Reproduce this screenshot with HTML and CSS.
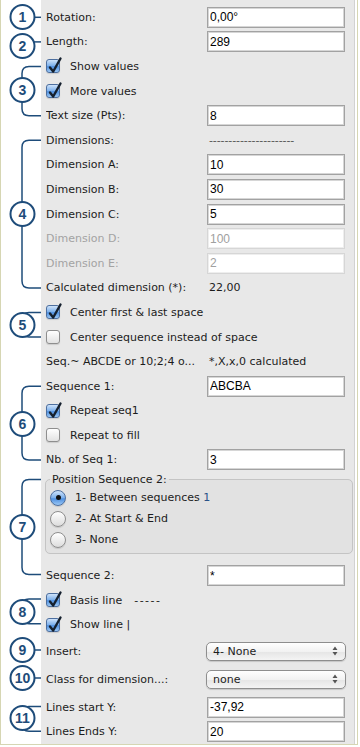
FILE: index.html
```html
<!DOCTYPE html>
<html lang="en">
<head>
    <meta charset="UTF-8">
    <meta name="viewport" content="width=device-width, initial-scale=1.0">
    <title>Dimension settings</title>
    <link rel="stylesheet" href="styles.css">
</head>
<body>

    <div class="frame">
        <!-- numbered callouts on the left -->
        <svg class="notes" width="40" height="744" viewBox="0 0 40 744">
            <g class="lines">
                <path d="M21.5,17.3 H40"/>
                <path d="M21.5,41.9 H40"/>
                <path d="M40,66.5 H28 Q21,66.5 21,73.5 V108.7 Q21,115.7 28,115.7 H40"/>
                <path d="M40,140.3 H28 Q21,140.3 21,147.3 V280.9 Q21,287.9 28,287.9 H40"/>
                <path d="M40,312.5 H28 Q21,312.5 21,319.5 V330.1 Q21,337.1 28,337.1 H40"/>
                <path d="M40,386.3 H28 Q21,386.3 21,393.3 V453.1 Q21,460.1 28,460.1 H40"/>
                <path d="M40,479.5 H28 Q21,479.5 21,486.5 V567.5 Q21,574.5 28,574.5 H40"/>
                <path d="M40,599 H28 Q21,599 21,606 V616.7 Q21,623.7 28,623.7 H40"/>
                <path d="M21.5,650 H40"/>
                <path d="M21.5,678 H40"/>
                <path d="M40,706.6 H28 Q21,706.6 21,713.6 V724.2 Q21,731.2 28,731.2 H40"/>
            </g>
            <g class="dots">
                <circle cx="21.5" cy="17" r="12"/>
                <circle cx="21.5" cy="46" r="12"/>
                <circle cx="21.5" cy="90" r="12"/>
                <circle cx="21.5" cy="214" r="12"/>
                <circle cx="21.5" cy="325" r="12"/>
                <circle cx="21.5" cy="424" r="12"/>
                <circle cx="21.5" cy="527" r="12"/>
                <circle cx="21.5" cy="612" r="12"/>
                <circle cx="21.5" cy="650" r="12"/>
                <circle cx="21.5" cy="678" r="12"/>
                <circle cx="21.5" cy="718" r="12"/>
            </g>
            <g class="nums">
                <text x="21.5" y="22">1</text>
                <text x="21.5" y="51">2</text>
                <text x="21.5" y="95">3</text>
                <text x="21.5" y="219">4</text>
                <text x="21.5" y="330">5</text>
                <text x="21.5" y="429">6</text>
                <text x="21.5" y="532">7</text>
                <text x="21.5" y="617">8</text>
                <text x="21.5" y="655">9</text>
                <text x="21.5" y="683">10</text>
                <text x="21.5" y="723">11</text>
            </g>
        </svg>

        <div class="panel">
            <div class="row">
                <span class="label">Rotation:</span>
                <input class="field" type="text" value="0,00°">
            </div>
            <div class="row">
                <span class="label">Length:</span>
                <input class="field" type="text" value="289">
            </div>
            <div class="row">
                <span class="box on"><svg viewBox="0 0 14 14"><path d="M3,7.5 L6.2,11.5 L13.5,-1.5"/></svg></span>
                <span>Show values</span>
            </div>
            <div class="row">
                <span class="box on"><svg viewBox="0 0 14 14"><path d="M3,7.5 L6.2,11.5 L13.5,-1.5"/></svg></span>
                <span>More values</span>
            </div>
            <div class="row">
                <span class="label">Text size (Pts):</span>
                <input class="field" type="text" value="8">
            </div>

            <!-- dimensions -->
            <div class="row">
                <span class="label">Dimensions:</span>
                <span class="value dashes">----------------------</span>
            </div>
            <div class="row">
                <span class="label">Dimension A:</span>
                <input class="field" type="text" value="10">
            </div>
            <div class="row">
                <span class="label">Dimension B:</span>
                <input class="field" type="text" value="30">
            </div>
            <div class="row">
                <span class="label">Dimension C:</span>
                <input class="field" type="text" value="5">
            </div>
            <div class="row">
                <span class="label off">Dimension D:</span>
                <input class="field" type="text" value="100" disabled>
            </div>
            <div class="row">
                <span class="label off">Dimension E:</span>
                <input class="field" type="text" value="2" disabled>
            </div>
            <div class="row">
                <span class="label">Calculated dimension (*):</span>
                <span class="value">22,00</span>
            </div>

            <div class="row">
                <span class="box on"><svg viewBox="0 0 14 14"><path d="M3,7.5 L6.2,11.5 L13.5,-1.5"/></svg></span>
                <span>Center first &amp; last space</span>
            </div>
            <div class="row">
                <span class="box"></span>
                <span>Center sequence instead of space</span>
            </div>
            <div class="row">
                <span class="label">Seq.~ ABCDE or 10;2;4 o...</span>
                <span class="value">*,X,x,0 calculated</span>
            </div>

            <!-- sequence 1 -->
            <div class="row">
                <span class="label">Sequence 1:</span>
                <input class="field" type="text" value="ABCBA">
            </div>
            <div class="row">
                <span class="box on"><svg viewBox="0 0 14 14"><path d="M3,7.5 L6.2,11.5 L13.5,-1.5"/></svg></span>
                <span>Repeat seq1</span>
            </div>
            <div class="row">
                <span class="box"></span>
                <span>Repeat to fill</span>
            </div>
            <div class="row">
                <span class="label">Nb. of Seq 1:</span>
                <input class="field" type="text" value="3">
            </div>

            <!-- sequence 2 -->
            <fieldset class="group">
                <legend>Position Sequence 2:</legend>
                <div class="option">
                    <span class="radio on"><span class="dot"></span></span>
                    <span>1- Between sequences <span class="blue">1</span></span>
                </div>
                <div class="option">
                    <span class="radio"></span>
                    <span>2- At Start &amp; End</span>
                </div>
                <div class="option">
                    <span class="radio"></span>
                    <span>3- None</span>
                </div>
            </fieldset>
            <div class="row">
                <span class="label">Sequence 2:</span>
                <input class="field" type="text" value="*">
            </div>

            <div class="row">
                <span class="box on"><svg viewBox="0 0 14 14"><path d="M3,7.5 L6.2,11.5 L13.5,-1.5"/></svg></span>
                <span>Basis line</span>
                <span class="rule">-----</span>
            </div>
            <div class="row">
                <span class="box on"><svg viewBox="0 0 14 14"><path d="M3,7.5 L6.2,11.5 L13.5,-1.5"/></svg></span>
                <span>Show line |</span>
            </div>

            <div class="row tall">
                <span class="label">Insert:</span>
                <div class="popup">
                    <span>4- None</span>
                    <svg class="arrows" width="6" height="10" viewBox="0 0 6 10"><path d="M0.5,4 L3,0.5 L5.5,4 Z M0.5,6 L3,9.5 L5.5,6 Z"/></svg>
                </div>
            </div>
            <div class="row tall">
                <span class="label">Class for dimension...:</span>
                <div class="popup">
                    <span>none</span>
                    <svg class="arrows" width="6" height="10" viewBox="0 0 6 10"><path d="M0.5,4 L3,0.5 L5.5,4 Z M0.5,6 L3,9.5 L5.5,6 Z"/></svg>
                </div>
            </div>

            <div class="row gap">
                <span class="label">Lines start Y:</span>
                <input class="field" type="text" value="-37,92">
            </div>
            <div class="row">
                <span class="label">Lines Ends Y:</span>
                <input class="field" type="text" value="20">
            </div>
        </div>
    </div>

</body>
</html>
```

FILE: styles.css
```css
body {
    margin: 0;
    background-color: #fff;
    font-family: "DejaVu Sans", sans-serif;
    font-size: 11px;
    color: #1c1c1c;
}

.frame {
    display: flex;
    width: 356px;
    height: 744px;
    border-left: 1px solid #d6d6b3;
    border-right: 1px solid #d6d6b3;
    border-bottom: 1px solid #d6d6b3;
}

/* callouts */
.notes {
    flex: none;
    display: block;
}

.notes .lines path {
    fill: none;
    stroke: #1e4c7a;
    stroke-width: 1.5;
}

.notes .dots circle {
    fill: #fff;
    stroke: #1e4c7a;
    stroke-width: 2;
}

.notes .nums text {
    font-family: "Liberation Sans", sans-serif;
    font-weight: bold;
    font-size: 14px;
    fill: #1e4c7a;
    text-anchor: middle;
}

.panel {
    flex: 1;
    background-color: #e8e8e8;
    border-right: 1px solid #d2d2d2;
    margin-right: 2px;
    padding: 5px 0 0 5px;
}

.row {
    display: flex;
    align-items: center;
    height: 24.6px;
    white-space: nowrap;
}

.row.tall {
    height: 28px;
}

.row.gap {
    margin-top: 2px;
}

.label {
    flex: none;
    width: 161px;
    overflow: hidden;
}

.label.off {
    color: #a3a3a3;
}

.value {
    padding-left: 2px;
}

.dashes {
    color: #555;
    letter-spacing: -0.1px;
}

.rule {
    margin-left: 12px;
    letter-spacing: 1.5px;
}

/* text fields */
.field {
    width: 138px;
    height: 21px;
    box-sizing: border-box;
    margin: 0;
    padding: 0 2px;
    border: 1px solid #a2a2a2;
    box-shadow: inset 0 0 0 1px #d6d6d6;
    background-color: #fff;
    font-family: "Liberation Sans", sans-serif;
    font-size: 12px;
    color: #000;
    outline: none;
}

.field:disabled {
    border-color: #d6d6d6;
    box-shadow: inset 0 0 0 1px #eeeeee;
    color: #a0a0a0;
}

/* check boxes */
.box {
    flex: none;
    width: 14px;
    height: 14px;
    box-sizing: border-box;
    margin: 0 10px 0 0;
    border: 1px solid #8e8e8e;
    border-radius: 3px;
    background: linear-gradient(#ffffff, #e2e2e2);
    box-shadow: 0 1px 1px rgba(0, 0, 0, 0.12);
}

.box.on {
    border-color: #4d6f9f;
    background: linear-gradient(#cfe3fa, #79aeeb 50%, #4f90e0 55%, #9bc7f4);
}

.box svg {
    display: block;
    width: 14px;
    height: 14px;
    overflow: visible;
}

.box svg path {
    fill: none;
    stroke: #15202e;
    stroke-width: 2.4;
    stroke-linecap: round;
    stroke-linejoin: round;
}

/* radio group */
.group {
    width: 308px;
    box-sizing: border-box;
    margin: 0 0 9px -1px;
    padding: 0 0 3px 4px;
    border: 1px solid #c4c4c4;
    border-radius: 5px;
    background-color: #e2e2e2;
}

.group legend {
    padding: 0 2px;
    line-height: 15px;
}

.option {
    display: flex;
    align-items: center;
    height: 21px;
}

.radio {
    flex: none;
    display: flex;
    align-items: center;
    justify-content: center;
    width: 16px;
    height: 16px;
    box-sizing: border-box;
    margin-right: 9px;
    border: 1px solid #8e8e8e;
    border-radius: 50%;
    background: linear-gradient(#ffffff, #dcdcdc);
    box-shadow: 0 1px 1px rgba(0, 0, 0, 0.12);
}

.radio.on {
    border-color: #4d6f9f;
    background: linear-gradient(#cfe3fa, #79aeeb 50%, #4f90e0 55%, #9bc7f4);
}

.radio .dot {
    width: 5px;
    height: 5px;
    border-radius: 50%;
    background-color: #111;
}

.blue {
    color: #2a5288;
}

/* popup menus */
.popup {
    display: flex;
    align-items: center;
    justify-content: space-between;
    width: 140px;
    height: 19px;
    box-sizing: border-box;
    margin-left: -1px;
    padding: 0 7px 0 6px;
    border: 1px solid #8e8e8e;
    border-radius: 5px;
    background: linear-gradient(#ffffff, #f2f2f2 50%, #e6e6e6 55%, #f4f4f4);
    box-shadow: 0 1px 1px rgba(0, 0, 0, 0.15);
}

.arrows path {
    fill: #555;
}
```
